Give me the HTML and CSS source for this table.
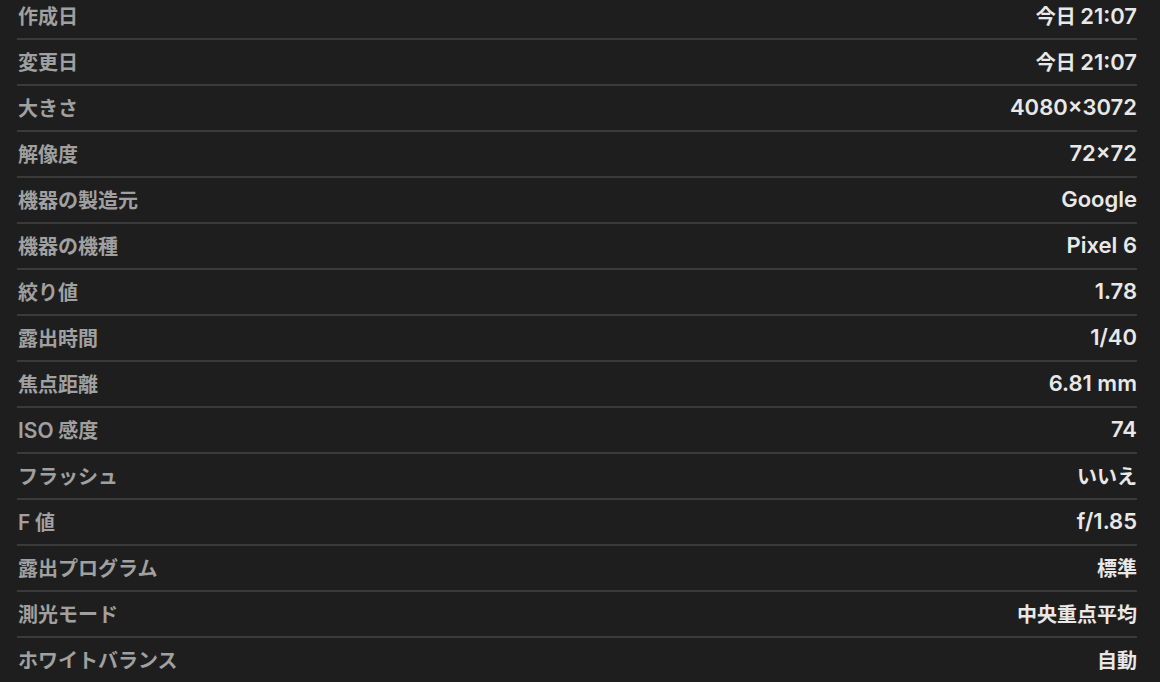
FILE: index.html
```html
<!DOCTYPE html>
<html lang="ja">
<head>
<meta charset="utf-8">
<link rel="stylesheet" href="styles.css">
</head>
<body>
<div class="info">
  <div class="row"><span class="label">作成日</span><span class="value">今日 <span class="lat">21:07</span></span></div>
  <div class="row"><span class="label">変更日</span><span class="value">今日 <span class="lat">21:07</span></span></div>
  <div class="row"><span class="label">大きさ</span><span class="value lat">4080×3072</span></div>
  <div class="row"><span class="label">解像度</span><span class="value lat">72×72</span></div>
  <div class="row"><span class="label">機器の製造元</span><span class="value lat">Google</span></div>
  <div class="row"><span class="label">機器の機種</span><span class="value lat">Pixel 6</span></div>
  <div class="row"><span class="label">絞り値</span><span class="value lat">1.78</span></div>
  <div class="row"><span class="label">露出時間</span><span class="value lat">1/40</span></div>
  <div class="row"><span class="label">焦点距離</span><span class="value lat">6.81 mm</span></div>
  <div class="row"><span class="label"><span class="lat">ISO</span> 感度</span><span class="value lat">74</span></div>
  <div class="row"><span class="label">フラッシュ</span><span class="value">いいえ</span></div>
  <div class="row"><span class="label"><span class="lat">F</span> 値</span><span class="value lat">f/1.85</span></div>
  <div class="row"><span class="label">露出プログラム</span><span class="value">標準</span></div>
  <div class="row"><span class="label">測光モード</span><span class="value">中央重点平均</span></div>
  <div class="row"><span class="label">ホワイトバランス</span><span class="value">自動</span></div>
</div>
</body>
</html>
```
FILE: styles.css
```css
html, body {
  margin: 0;
  padding: 0;
  background: #1e1e1e;
  overflow: hidden;
}
body {
  font-family: "Noto Sans CJK JP", sans-serif;
  font-size: 20px;
  font-weight: 600;
}
.info {
  margin: -6px 23px 0 17px;
  display: flex;
  flex-direction: column;
}
.row {
  height: 42px;
  padding-bottom: 2px;
  display: flex;
  align-items: center;
  justify-content: space-between;
  border-bottom: 2px solid #3a3a3a;
}
.label {
  color: #a0a0a0;
  margin-left: 1px;
  white-space: nowrap;
}
.value {
  color: #e8e8e8;
  white-space: nowrap;
}
.lat {
  font-family: Inter, "Noto Sans CJK JP", sans-serif;
  font-size: 22px;
}
.label .lat {
  font-size: 21px;
}
```
